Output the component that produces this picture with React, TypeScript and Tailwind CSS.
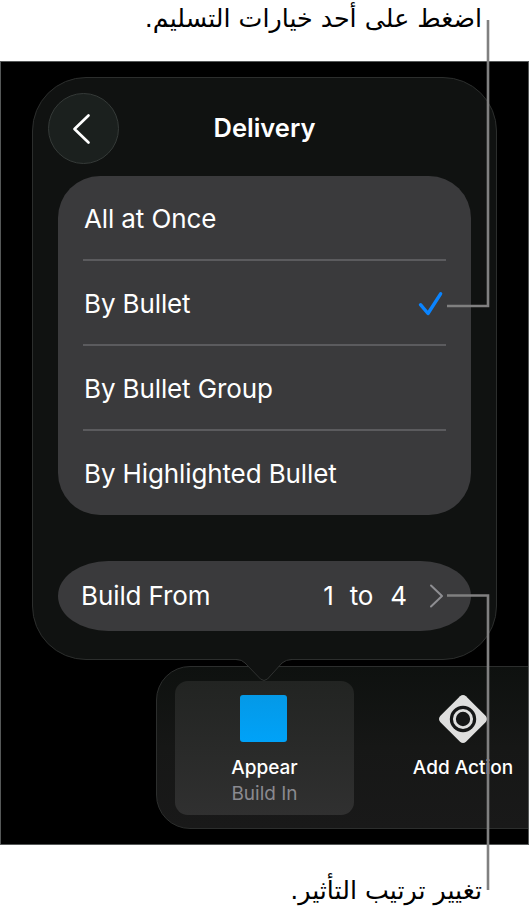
import React from "react";

const options = [
  { label: "All at Once" },
  { label: "By Bullet", selected: true },
  { label: "By Bullet Group" },
  { label: "By Highlighted Bullet" },
];

function CheckIcon() {
  return (
    <svg width="26" height="26" viewBox="0 0 26 26" fill="none" className="mr-[3px] mt-[2px]">
      <path d="M3.5 13.7L11 22.5L23.6 2.8" stroke="#0a84ff" strokeWidth="3.4" strokeLinecap="round" strokeLinejoin="round" />
    </svg>
  );
}

function ActionIcon() {
  return (
    <svg width="50" height="50" viewBox="0 0 50 50" className="mt-px">
      <path d="M22 2.2Q25 -.2 28 2.2L47.8 22Q50.2 25 47.8 28L28 47.8Q25 50.2 22 47.8L2.2 28Q-.2 25 2.2 22Z" fill="#dfdfde" />
      <circle cx="25" cy="25" r="13.2" fill="#161717" />
      <circle cx="25" cy="25" r="8.6" fill="none" stroke="#dfdfde" strokeWidth="2.9" />
    </svg>
  );
}

function Callouts() {
  return (
    <svg className="pointer-events-none absolute left-0 top-0 z-20" width="529" height="913" fill="none" stroke="#808080" strokeWidth="2.6">
      <path d="M488 20V306H447" />
      <path d="M447 595.5H488V890" />
    </svg>
  );
}

function Popover() {
  return (
    <section className="relative z-10 ml-[31px] flex h-[583px] w-[465px] flex-col rounded-[54px] border border-[#2c2e2d] bg-[#101211] px-[25px] pt-[15px]">
      <header className="ml-[-10px] grid h-[71px] grid-cols-[71px_1fr_61px] items-center">
        <button className="flex size-[71px] items-center justify-center rounded-full border border-[#353a38] bg-[#1b201e]">
          <svg width="20" height="32" viewBox="0 0 20 32" fill="none" className="mr-[5px]">
            <path d="M17.5 2.5L3.5 16L17.5 29.5" stroke="white" strokeWidth="2.7" strokeLinecap="round" strokeLinejoin="round" />
          </svg>
        </button>
        <h1 className="text-center text-[25.5px] font-semibold text-white">Delivery</h1>
      </header>
      <ul className="mt-3 flex h-[339px] w-[413px] flex-col rounded-[42px] bg-[#3a3a3c] px-[25px]">
        {options.map((o, i) => (
          <li
            key={o.label}
            className={`flex shrink-0 items-center justify-between pt-px text-[26px] tracking-[-0.12px] text-white ${i < 3 ? "h-[85px] border-b-2 border-[#5b5b5e]" : "h-[84px]"}`}
          >
            <span className="ml-px">{o.label}</span>
            {o.selected && <CheckIcon />}
          </li>
        ))}
      </ul>
      <button className="mt-[46px] flex h-[70px] w-[413px] items-center rounded-[50px/35px] bg-[#3a3a3c] pb-px pl-[23px] pr-[26px] text-[26px] tracking-[-0.1px] text-white">
        <span className="flex-1 text-left">Build From</span>
        <span className="mr-[16px]">1</span>
        <span className="mr-[17px]">to</span>
        <span className="mr-[22px]">4</span>
        <svg width="16" height="26" viewBox="0 0 16 26" fill="none">
          <path d="M2 2.5L13 13L2 23.5" stroke="#8e8e92" strokeWidth="2" strokeLinecap="round" strokeLinejoin="round" />
        </svg>
      </button>
      <svg className="absolute left-[203px] top-[580px]" width="56" height="25" viewBox="0 0 56 25">
        <path d="M0 0V1.5Q6 1.5 9 5L24.5 21Q28 24 31.5 21L46 5Q50 1.5 56 1.5V0Z" fill="#101211" />
        <path d="M0 1.5Q6 1.5 9 5L24.5 21Q28 24 31.5 21L46 5Q50 1.5 56 1.5" fill="none" stroke="#303231" />
      </svg>
    </section>
  );
}

function BuildTray() {
  return (
    <section className="ml-[155px] mt-[6px] flex h-[163px] w-[440px] shrink-0 rounded-[34px] border border-[#2c2e2d] bg-linear-to-b from-[#0e110f] via-[#161716] to-[#191919] pl-[18px] pt-[14px]">
      <div className="flex h-[134px] w-[179px] flex-col items-center rounded-[13px] bg-linear-to-b from-[#222422] to-[#303030] pt-[14px]">
        <div className="mr-[2px] size-[47px] rounded-[3px] bg-linear-to-b from-[#0499e7] to-[#00a2f8]" />
        <div className="mt-[13px] text-[19px] font-medium leading-[26px] text-white">Appear</div>
        <div className="text-[19px] leading-[26px] text-[#8a8a90]">Build In</div>
      </div>
      <div className="ml-[49px] flex w-[120px] flex-col items-center pt-3">
        <ActionIcon />
        <div className="mt-[11px] whitespace-nowrap text-[19px] font-medium leading-[26px] text-white">Add Action</div>
      </div>
    </section>
  );
}

export default function App() {
  return (
    <main className="relative flex h-[913px] w-[529px] flex-col overflow-hidden bg-white font-['Inter',sans-serif]">
      <p dir="rtl" className="h-[61px] pr-[47px] pt-px font-['DejaVu_Sans',sans-serif] text-[25.3px] leading-[36px] text-black">
        اضغط على أحد خيارات التسليم.
      </p>
      <div className="h-[784px] overflow-hidden border border-[#555858] bg-black pt-[15px]">
        <Popover />
        <BuildTray />
      </div>
      <p dir="rtl" className="mt-[28px] pr-[47px] font-['DejaVu_Sans',sans-serif] text-[25.3px] leading-[36px] text-black">
        تغيير ترتيب التأثير.
      </p>
      <Callouts />
    </main>
  );
}
